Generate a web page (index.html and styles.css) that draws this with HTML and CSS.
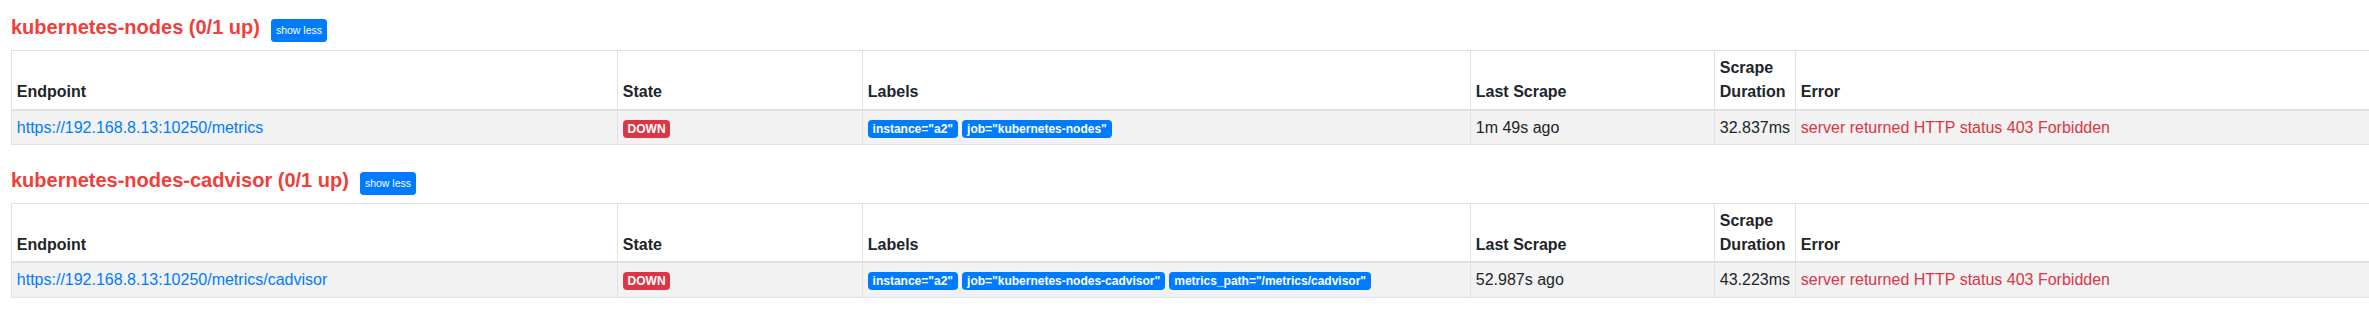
FILE: index.html
```html
<!DOCTYPE html>
<html lang="en">
<head>
<meta charset="utf-8">
<title>Targets</title>
<link rel="stylesheet" href="styles.css">
</head>
<body>
<main class="page">
  <section class="pool">
    <h2 class="pool-title"><a class="pool-link" href="#job-kubernetes-nodes">kubernetes-nodes (0/1 up)</a><button type="button" class="btn-toggle">show less</button></h2>
    <table class="targets">
      <colgroup>
        <col class="c-endpoint"><col class="c-state"><col class="c-labels"><col class="c-last"><col class="c-dur"><col class="c-err">
      </colgroup>
      <thead>
        <tr>
          <th>Endpoint</th>
          <th>State</th>
          <th>Labels</th>
          <th>Last Scrape</th>
          <th>Scrape Duration</th>
          <th>Error</th>
        </tr>
      </thead>
      <tbody>
        <tr>
          <td><a class="endpoint" href="#">https://192.168.8.13:10250/metrics</a></td>
          <td><span class="badge badge-down">DOWN</span></td>
          <td><span class="badge badge-label">instance="a2"</span> <span class="badge badge-label">job="kubernetes-nodes"</span></td>
          <td>1m 49s ago</td>
          <td>32.837ms</td>
          <td class="err">server returned HTTP status 403 Forbidden</td>
        </tr>
      </tbody>
    </table>
  </section>

  <section class="pool">
    <h2 class="pool-title"><a class="pool-link" href="#job-kubernetes-nodes-cadvisor">kubernetes-nodes-cadvisor (0/1 up)</a><button type="button" class="btn-toggle">show less</button></h2>
    <table class="targets">
      <colgroup>
        <col class="c-endpoint"><col class="c-state"><col class="c-labels"><col class="c-last"><col class="c-dur"><col class="c-err">
      </colgroup>
      <thead>
        <tr>
          <th>Endpoint</th>
          <th>State</th>
          <th>Labels</th>
          <th>Last Scrape</th>
          <th>Scrape Duration</th>
          <th>Error</th>
        </tr>
      </thead>
      <tbody>
        <tr>
          <td><a class="endpoint" href="#">https://192.168.8.13:10250/metrics/cadvisor</a></td>
          <td><span class="badge badge-down">DOWN</span></td>
          <td><span class="badge badge-label">instance="a2"</span> <span class="badge badge-label">job="kubernetes-nodes-cadvisor"</span> <span class="badge badge-label">metrics_path="/metrics/cadvisor"</span></td>
          <td>52.987s ago</td>
          <td>43.223ms</td>
          <td class="err">server returned HTTP status 403 Forbidden</td>
        </tr>
      </tbody>
    </table>
  </section>
</main>
</body>
</html>
```

FILE: styles.css
```css
html, body {
  margin: 0;
  padding: 0;
  overflow: hidden;
  background: #fff;
}

body {
  font-family: "Liberation Sans", Arial, sans-serif;
  font-size: 16px;
  line-height: 1.5;
  color: #212529;
}

.page {
  padding: 15.3px 0 0 11px;
}

.pool {
  margin-bottom: 22.3px;
}

.pool-title {
  margin: 0 0 8px 0;
  font-size: 20px;
  font-weight: 700;
  line-height: 24px;
}

.pool-link {
  color: #ee3f3a;
  text-decoration: none;
}

.btn-toggle {
  display: inline-block;
  margin: 0 0 0 11px;
  padding: 3px 4px;
  font-family: "Liberation Sans", Arial, sans-serif;
  font-size: 10.5px;
  font-weight: 400;
  line-height: 15px;
  color: #fff;
  background: #007bff;
  border: 1px solid #007bff;
  border-radius: 3px;
  vertical-align: baseline;
}

.targets {
  table-layout: fixed;
  width: 2600px;
  border-collapse: collapse;
}

.c-endpoint { width: 606px; }
.c-state { width: 245px; }
.c-labels { width: 608px; }
.c-last { width: 244px; }
.c-dur { width: 81px; }

.targets th,
.targets td {
  padding: 4.8px;
  border: 1px solid #dee2e6;
  text-align: left;
}

.targets th {
  vertical-align: bottom;
  font-weight: 700;
  border-bottom-width: 2px;
}

.targets td {
  vertical-align: top;
  white-space: nowrap;
  background: #f2f2f2;
}

.endpoint {
  color: #007bff;
  text-decoration: none;
}

.err {
  color: #dc3545;
}

.badge {
  display: inline-block;
  padding: 3px 4.8px;
  font-size: 12px;
  font-weight: 700;
  line-height: 1;
  color: #fff;
  border-radius: 4px;
  white-space: nowrap;
  vertical-align: baseline;
}

.badge-down {
  background: #dc3545;
}

.badge-label {
  background: #007bff;
}
```
